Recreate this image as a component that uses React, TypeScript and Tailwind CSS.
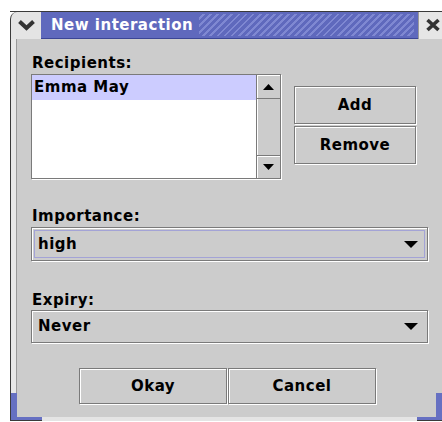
import React from "react";

const etched = "border border-[#7a7a7a] shadow-[inset_1px_1px_0_#ffffff,1px_1px_0_#ffffff]";
const label = "text-[15px] font-bold text-black tracking-[0.5px]";

function Chevron() {
  return (
    <svg width="19" height="12" viewBox="0 0 19 12">
      <polyline points="2.5,2.5 9.5,9 16.5,2.5" fill="none" stroke="#333" strokeWidth="4" strokeLinejoin="miter" />
    </svg>
  );
}

function CloseGlyph() {
  return (
    <svg width="16" height="14" viewBox="0 0 16 14">
      <path d="M2.5 2 L13.5 12 M13.5 2 L2.5 12" stroke="#333" strokeWidth="3.6" strokeLinecap="butt" />
    </svg>
  );
}

function Tri({ up }: { up?: boolean }) {
  return (
    <svg width="11" height="6" viewBox="0 0 11 6">
      <polygon points={up ? "0,6 11,6 5.5,0" : "0,0 11,0 5.5,6"} fill="#000" />
    </svg>
  );
}

function Combo({ value, focused, h }: { value: string; focused?: boolean; h: string }) {
  return (
    <div className={`${etched} ${h} w-[397px] bg-[#cccccc] p-[2px] flex`}>
      <div
        className={`flex-1 flex items-center justify-between pl-[3px] pr-[6px] border ${
          focused ? "border-[#a3a3d6]" : "border-transparent"
        }`}
      >
        <span className={`${label} leading-none`}>{value}</span>
        <svg width="14" height="7" viewBox="0 0 14 7">
          <polygon points="0,0 14,0 7,7" fill="#000" />
        </svg>
      </div>
    </div>
  );
}

function Btn({ text, w, h }: { text: string; w: string; h: string }) {
  return (
    <div className={`${etched} ${w} ${h} bg-[#cccccc] flex items-center justify-center`}>
      <span className={`${label} leading-none`}>{text}</span>
    </div>
  );
}

export default function App() {
  return (
    <div className="relative w-[442px] h-[422px] bg-white overflow-hidden pt-[11px] pl-[10px] font-['DejaVu_Sans',sans-serif]">
      <div className="w-[432px] h-[410px] flex flex-col">
        {/* title bar */}
        <div className="h-[28px] flex border-t border-[#3a3a3a]">
          <div className="shrink-0 w-[31px] rounded-tl-[7px] border-l border-[#3a3a3a] bg-[#e4e4e4] flex items-center justify-center pb-[2px]">
            <Chevron />
          </div>
          <div className="shrink-0 w-[377px] border-b border-[#3b4595] bg-[#5f69bd] flex items-center pl-[10px] pr-[4px]">
            <span className="shrink-0 text-white text-[15px] tracking-[0.5px] font-bold leading-none whitespace-nowrap">New interaction</span>
            <div className="ml-[6px] flex-1 h-[22px] bg-[repeating-linear-gradient(-45deg,#5f69bd_0px,#5f69bd_3px,#7f88d2_3px,#7f88d2_5px)]" />
          </div>
          <div className="shrink-0 w-[24px] bg-[#e6e6e6] border-l border-[#9a9a9a] flex items-center pl-[6px] pb-[2px]">
            <CloseGlyph />
          </div>
        </div>

        {/* body */}
        <div className="flex-1 flex">
          <div className="w-[7px] border-l border-[#3a3a3a] bg-[#e8e8e8] border-r border-r-[#9a9a9a]" />
          <div className="flex-1 bg-[#cccccc] pt-[15px] pl-[14px] flex flex-col border-b-[4px] border-[#e4e4e4]">
            <div className={`h-[18px] pl-[1px] leading-[18px] ${label}`}>Recipients:</div>
            <div className="flex items-start mt-[2px]">
              <div className={`${etched} w-[250px] h-[105px] bg-white flex`}>
                <div className="flex-1">
                  <div className="h-[25px] bg-[#ccccff] flex items-center pl-[2px]">
                    <span className={`${label} leading-none`}>Emma May</span>
                  </div>
                </div>
                <div className="w-[24px] bg-[#cccccc] flex flex-col border-l border-[#7a7a7a]">
                  <div className="h-[24px] border-b border-[#7a7a7a] shadow-[inset_1px_1px_0_#ffffff] flex items-center justify-center">
                    <Tri up />
                  </div>
                  <div className="flex-1 shadow-[inset_1px_0_0_#ffffff]" />
                  <div className="h-[23px] border-t border-[#7a7a7a] shadow-[inset_1px_1px_0_#ffffff] flex items-center justify-center">
                    <Tri />
                  </div>
                </div>
              </div>
              <div className="ml-[13px] mt-[12px] flex flex-col gap-[2px]">
                <Btn text="Add" w="w-[122px]" h="h-[38px]" />
                <Btn text="Remove" w="w-[122px]" h="h-[38px]" />
              </div>
            </div>

            <div className={`mt-[28px] h-[18px] pl-[1px] leading-[18px] ${label}`}>Importance:</div>
            <div className="mt-[2px]">
              <Combo value="high" focused h="h-[34px]" />
            </div>

            <div className={`mt-[30px] h-[18px] pl-[1px] leading-[18px] ${label}`}>Expiry:</div>
            <div className="mt-[1px]">
              <Combo value="Never" h="h-[33px]" />
            </div>

            <div className="mt-[25px] ml-[48px] flex gap-[1px]">
              <Btn text="Okay" w="w-[148px]" h="h-[36px]" />
              <Btn text="Cancel" w="w-[148px]" h="h-[36px]" />
            </div>
          </div>
        </div>
      </div>

      {/* resize corners of the frame */}
      <div className="absolute left-[10px] top-[393px] w-[7px] h-[28px] bg-[#6670c2] border-l border-[#3a3a3a]" />
      <div className="absolute left-[10px] top-[417px] w-[32px] h-[4px] bg-[#6670c2] border-l border-b border-[#3a3a3a]" />
      <div className="absolute left-[436px] top-[393px] w-[6px] h-[28px] bg-[#6670c2]" />
      <div className="absolute left-[417px] top-[417px] w-[25px] h-[4px] bg-[#6670c2] border-b border-[#3a3a3a]" />
    </div>
  );
}
